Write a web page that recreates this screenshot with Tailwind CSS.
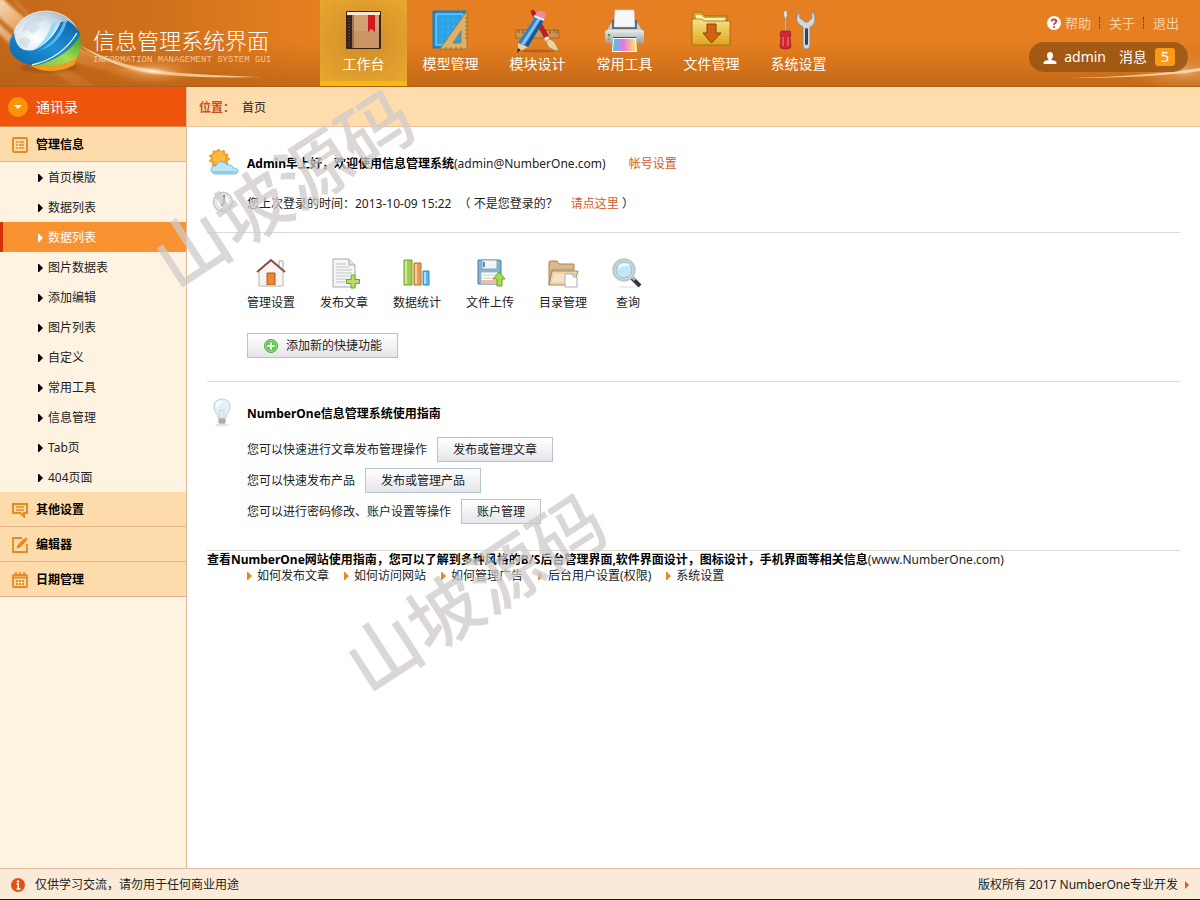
<!DOCTYPE html>
<html lang="zh-CN">
<head>
    <meta charset="UTF-8">
    <meta name="viewport" content="width=device-width, initial-scale=1.0">
    <title>信息管理系统界面</title>
    <script src="https://cdn.jsdelivr.net/npm/@tailwindcss/browser@4"></script>
    <style>
        body {
            font-family: "Noto Sans", "Noto Sans CJK SC", sans-serif;
        }
        .mono {
            font-family: "Liberation Mono", monospace;
        }
    </style>
</head>
<body class="relative flex min-h-screen flex-col overflow-x-hidden bg-white text-[12px] leading-4 text-[#222]">

    <!-- Header -->
    <header class="relative flex h-[87px] overflow-hidden border-b border-[#a9601c] bg-linear-to-b from-[#e57f21] from-50% to-[#c46815] text-white">
        <svg class="absolute left-0 top-0" width="320" height="86" viewBox="0 0 320 86" aria-hidden="true">
            <defs>
                <linearGradient id="shade" x1="0" x2="1" y1="0" y2="0">
                    <stop offset="0" stop-color="#b45f17" stop-opacity=".7"/>
                    <stop offset=".5" stop-color="#bb6316" stop-opacity=".5"/>
                    <stop offset="1" stop-color="#c46a18" stop-opacity="0"/>
                </linearGradient>
                <radialGradient id="glow">
                    <stop offset="0" stop-color="#fff" stop-opacity=".95"/>
                    <stop offset=".25" stop-color="#ffdcae" stop-opacity=".6"/>
                    <stop offset="1" stop-color="#f8a04c" stop-opacity="0"/>
                </radialGradient>
                <linearGradient id="beam" x1="0" x2="1" y1="0" y2="1">
                    <stop offset="0" stop-color="#fff3df" stop-opacity=".9"/>
                    <stop offset=".35" stop-color="#f6b877" stop-opacity=".6"/>
                    <stop offset="1" stop-color="#e8924a" stop-opacity=".15"/>
                </linearGradient>
                <filter id="soft"><feGaussianBlur stdDeviation="1.6"/></filter>
                <filter id="thin"><feGaussianBlur stdDeviation=".6"/></filter>
            </defs>
            <rect width="320" height="86" fill="url(#shade)"/>
            <g filter="url(#soft)">
                <path d="M0 -4 C30 25 60 48 150 70 L120 74 C70 62 30 50 -4 14Z" fill="url(#beam)"/>
                <path d="M-4 20 C20 48 60 60 100 90 L78 90 C50 66 18 56 -4 30Z" fill="url(#beam)" opacity=".8"/>
                <path d="M14 0 C40 30 70 48 110 62" fill="none" stroke="#f0b070" stroke-opacity=".35" stroke-width="3"/>
            </g>
            <path d="M78 44 Q120 69 180 73 Q220 76 262 77 Q200 79 150 73 Q110 67 78 44Z" fill="#ffe6c4" opacity=".75" filter="url(#thin)"/>
            <ellipse cx="152" cy="71" rx="46" ry="14" fill="url(#glow)" opacity=".6"/>
            <ellipse cx="152" cy="71" rx="34" ry="5" fill="url(#glow)" transform="rotate(6 152 71)"/>
        </svg>
        <svg class="absolute right-0 top-0" width="200" height="86" viewBox="0 0 200 86" aria-hidden="true">
            <ellipse cx="185" cy="72" rx="60" ry="22" fill="url(#glow)" opacity=".45"/>
            <path d="M70 78 Q150 76 200 68 L200 71 Q150 78 70 78Z" fill="#ffe2bd" opacity=".8" filter="url(#thin)"/>
        </svg>

        <a href="#" class="relative flex w-80 shrink-0 items-start pl-2">
            <svg class="mt-2 shrink-0" width="76" height="70" viewBox="0 0 76 70" aria-hidden="true">
                <defs>
                    <radialGradient id="ball" cx=".35" cy=".5" r=".7">
                        <stop offset="0" stop-color="#fff"/>
                        <stop offset=".45" stop-color="#dfe9f0"/>
                        <stop offset="1" stop-color="#8fa9ba"/>
                    </radialGradient>
                    <linearGradient id="blueBand" x1="0" x2="1" y1="1" y2="0">
                        <stop offset="0" stop-color="#0a63a8"/>
                        <stop offset=".5" stop-color="#1f8fd6"/>
                        <stop offset="1" stop-color="#0d62a8"/>
                    </linearGradient>
                    <linearGradient id="greenBand" x1="0" x2="1" y1="1" y2="0">
                        <stop offset="0" stop-color="#7cc142"/>
                        <stop offset=".5" stop-color="#a5dc4e"/>
                        <stop offset="1" stop-color="#3c9a2c"/>
                    </linearGradient>
                </defs>
                <ellipse cx="41" cy="60" rx="29" ry="5" fill="#7a3c08" opacity=".35" filter="url(#soft)"/>
                <ellipse cx="38" cy="31" rx="33" ry="28" fill="url(#ball)" stroke="#fff" stroke-opacity=".7"/>
                <path d="M16 16q8-7 16-8l4 4-7 3 3 5-8 6-4-4-6 2zM10 31l8-2 5 4-5 7-7-2z" fill="#b9cedb" opacity=".4" filter="url(#thin)"/>
                <path d="M22 57 Q52 58 70 46 Q69 52 66 57 Q56 63 40 63 Q28 62 22 57Z" fill="#f59a1b"/>
                <path d="M22 57 Q52 52 68 28 L72 27 Q75 42 68 50 Q50 62 22 57Z" fill="url(#greenBand)"/>
                <path d="M6 24 Q8 46 26 42 Q44 34 53 14 L60 13 Q71 20 72 27 Q60 50 26 58 Q-2 52 2 32Z" fill="url(#blueBand)"/>
                <path d="M24 42 Q39 34 44 14 L49 13 Q45 34 24 42Z" fill="#8fe0f8"/>
                <path d="M30 43 Q48 35 56 13 L59 13 Q52 37 30 43Z" fill="#56bdf0"/>
                <path d="M24 57 Q54 50 69 25" fill="none" stroke="#e6f6b0" stroke-width="1.4"/>
            </svg>
            <span class="ml-[9px] mt-[25px] block whitespace-nowrap">
                <span class="block text-[22px] font-light leading-[30px]">信息管理系统界面</span>
                <span class="mono block text-[9px] leading-[10px] text-[#f3c597]">INFORMATION MANAGEMENT SYSTEM GUI</span>
            </span>
        </a>

        <!-- Main navigation -->
        <nav class="relative flex text-[14px] leading-5">
            <a href="#" class="flex w-[87px] flex-col items-center border-b-[5px] border-[#f9b90c] bg-radial from-[#cf8a2a] to-[#e9a92f] pt-2">
                <svg width="45" height="45" viewBox="0 0 45 45" aria-hidden="true">
                    <rect x="5" y="3" width="35" height="38" rx="1" fill="#33231a"/>
                    <path d="M6 4h33v3H6z" fill="#f5ead8"/>
                    <path d="M11 7h27v33H11z" fill="#c89566"/>
                    <path d="M11 7h27v16H11z" fill="#d8aa7c" opacity=".6"/>
                    <path d="M8 7v33" stroke="#806a55" stroke-dasharray="1 2"/>
                    <path d="M12 7v33" stroke="#6e4a2e"/>
                    <path d="M27 7h7v17l-3.500-3-3.500 3z" fill="#d11b1f"/>
                </svg>
                <span class="mt-px">工作台</span>
            </a>
            <a href="#" class="flex w-[87px] flex-col items-center pt-2">
                <svg width="45" height="45" viewBox="0 0 45 45" aria-hidden="true">
                    <path d="M5 3h33v37H5z" fill="#168bd3" stroke="#2479ab"/>
                    <path d="M8 6h27v31H8z" fill="#2aa2e6" stroke="#a4def8"/>
                    <path d="M8 12h27M8 18h27M8 24h27M8 30h27M14 6v31M20 6v31M26 6v31" stroke="#68c3f0" stroke-width=".6" opacity=".4"/>
                    <path d="M12 41 39 3v38zM25 35h8V23z" fill="#dfb069" fill-rule="evenodd" stroke="#9e7132" stroke-width=".8"/>
                    <path d="M37 10h2M37 14h2M37 18h2M37 22h2M37 26h2M37 30h2M18 39v2M23 39v2M28 39v2M33 39v2" stroke="#7d5623" stroke-width=".8"/>
                </svg>
                <span class="mt-px">模型管理</span>
            </a>
            <a href="#" class="flex w-[87px] flex-col items-center pt-2">
                <svg width="45" height="45" viewBox="0 0 45 45" aria-hidden="true">
                    <ellipse cx="23" cy="43" rx="17" ry="1.500" fill="#8c4a10" opacity=".5"/>
                    <rect x="1" y="22" width="43" height="8" fill="#d0964d" stroke="#8f5a24" stroke-width=".7"/>
                    <path d="M4 22v3M8 22v4M12 22v3M16 22v4M31 22v3M35 22v4M39 22v3M42 22v4" stroke="#6c3f14" stroke-width=".8"/>
                    <path d="M16 4q1-4 4 0l14 25-4 2z" fill="#c31b2b" stroke="#851420" stroke-width=".6"/>
                    <path d="m29 30 4-2 2 4-4 2z" fill="#f6f1e6"/>
                    <path d="M31 33q5-4 9 2 2 4 4 8-12-1-13-10z" fill="#e9d3a3" stroke="#a57a3d" stroke-width=".7"/>
                    <path d="M20 9 29 12 13 39 3 35z" fill="#2e83c4"/>
                    <path d="m23 10 3 1L9 37l-3-1z" fill="#86c0e8"/>
                    <path d="m26 11 3 1-16 27-3-1z" fill="#185a94"/>
                    <path d="m3 35 10 4-10 5z" fill="#f2d29b"/>
                    <path d="m3 40 3 2-4 3z" fill="#3d2a1c"/>
                    <path d="m19 9 3-5q5-3 9 2l-2 6z" fill="#ee89a5"/>
                    <path d="m19 8 10 4" stroke="#ecedf0" stroke-width="2"/>
                </svg>
                <span class="mt-px">模块设计</span>
            </a>
            <a href="#" class="flex w-[87px] flex-col items-center pt-2">
                <svg width="45" height="45" viewBox="0 0 45 45" aria-hidden="true">
                    <defs>
                        <linearGradient id="ink">
                            <stop offset="0" stop-color="#41c7f2"/>
                            <stop offset=".45" stop-color="#e779dc"/>
                            <stop offset=".7" stop-color="#f6a3b3"/>
                            <stop offset="1" stop-color="#fff04a"/>
                        </linearGradient>
                        <linearGradient id="metal" x1="0" x2="0" y1="0" y2="1">
                            <stop offset="0" stop-color="#e8ebed"/>
                            <stop offset="1" stop-color="#959ca2"/>
                        </linearGradient>
                    </defs>
                    <path d="M9 15h27l6 12H3z" fill="#c9ced2"/>
                    <path d="M10 12h25v9H10z" fill="#5f666c"/>
                    <path d="M13 2h19l1 17H12z" fill="#f7f8fa" stroke="#c7ccd0" stroke-width=".6"/>
                    <rect x="3" y="22" width="39" height="14" rx="2" fill="url(#metal)"/>
                    <path d="M11 29h23v4H11z" fill="#4a4f54"/>
                    <path d="M11 30h23l1 14H10z" fill="#fff"/>
                    <path d="M12 31h21l1 12H11z" fill="url(#ink)"/>
                    <circle cx="7" cy="27" r="1.300" fill="#36a829"/>
                    <circle cx="7" cy="31" r="1.300" fill="#e28b24"/>
                </svg>
                <span class="mt-px">常用工具</span>
            </a>
            <a href="#" class="flex w-[87px] flex-col items-center pt-2">
                <svg width="45" height="45" viewBox="0 0 45 45" aria-hidden="true">
                    <defs>
                        <linearGradient id="gold" x1="0" x2="0" y1="0" y2="1">
                            <stop offset="0" stop-color="#fbe184"/>
                            <stop offset="1" stop-color="#dda71f"/>
                        </linearGradient>
                    </defs>
                    <path d="M4 7q0-3 2-3h6l4 4h22v6H4z" fill="#dba92d" stroke="#97670d" stroke-width=".8"/>
                    <path d="M7 7h5l3 3h21v3H7z" fill="#fff0b5"/>
                    <path d="M3 11h9l4 2h25v23q0 1-1 1H4q-1 0-1-1z" fill="url(#gold)" stroke="#97670d" stroke-width=".8"/>
                    <path d="M18 16h9v9h5L22.500 35 14 25h4z" fill="#cf6513" stroke="#8b3f07"/>
                </svg>
                <span class="mt-px">文件管理</span>
            </a>
            <a href="#" class="flex w-[87px] flex-col items-center pt-2">
                <svg width="45" height="45" viewBox="0 0 45 45" aria-hidden="true">
                    <path d="M8 3h3v5l-1 2v14H9V10L8 8z" fill="#eceff1" stroke="#8c8c8c" stroke-width=".6"/>
                    <path d="M5 23h9l1 4-1 3 1 9q-1 2-5.500 2T4 39l1-9-1-3z" fill="#d22432" stroke="#8e1420" stroke-width=".6"/>
                    <path d="M7 29v9M12 29v9" stroke="#f28a8f"/>
                    <path d="M23 4q-5 8 0 12 2 2 4 3v17q0 5 3.500 5t3.500-5V19q5-2 5-8t-4-7l1 6-4 4h-3l-5-4z" fill="#cfd8e0" stroke="#7e8a94" stroke-width=".8"/>
                    <rect x="29" y="20" width="3" height="17" rx="1.500" fill="#39424b"/>
                </svg>
                <span class="mt-px">系统设置</span>
            </a>
        </nav>

        <!-- User area -->
        <div class="relative ml-auto flex flex-col items-end pr-3">
            <div class="mt-3.5 flex h-[18px] items-center pr-[9px] text-[13px] text-[#f8d5a8]">
                <svg class="mr-1" width="14" height="14" viewBox="0 0 14 14" aria-hidden="true">
                    <circle cx="7" cy="7" r="7" fill="#fff"/>
                    <path d="M4.700 5.500q0-2.200 2.300-2.200t2.300 2q0 1-1.200 1.700T7 8.800" fill="none" stroke="#c8333b" stroke-width="1.700"/>
                    <circle cx="7" cy="11" r="1" fill="#c8333b"/>
                </svg>
                <a href="#">帮助</a>
                <a href="#" class="ml-2 border-l border-dotted border-[#5c2b05] pl-[9px] leading-3">关于</a>
                <a href="#" class="ml-2 border-l border-dotted border-[#5c2b05] pl-[9px] leading-3">退出</a>
            </div>
            <div class="mt-2.5 flex h-[30px] items-center rounded-full bg-[#8f4f10]/75 pl-3.5 pr-[13px] text-[14px]">
                <svg class="mt-0.5" width="14" height="14" viewBox="0 0 14 14" aria-hidden="true">
                    <path d="M7 1q3 0 3 3.500Q10 7 8.500 8v1l4 1q1 .5 1 3H.5q0-2.500 1-3l4-1V8Q4 7 4 4.500 4 1 7 1z" fill="#fff"/>
                </svg>
                <a href="#" class="ml-[7px]">admin</a>
                <a href="#" class="ml-[13px] flex items-center">消息
                    <b class="ml-2 flex h-[18px] w-5 items-center justify-center rounded-[3px] bg-[#fb9a17] font-normal">5</b>
                </a>
            </div>
        </div>
    </header>

    <div class="flex grow">
        <!-- Sidebar -->
        <aside class="w-[187px] shrink-0 border-r border-[#dfb995] bg-[#fef3e0]">
            <div class="flex h-10 items-center border-b border-[#d98a52] bg-[#ee540b] pl-2 text-[14px] text-white">
                <svg class="mr-2" width="20" height="20" viewBox="0 0 20 20" aria-hidden="true">
                    <circle cx="10" cy="10" r="10" fill="#fb9208"/>
                    <path d="M6 8h8l-4 4z" fill="#fff"/>
                </svg>
                通讯录
            </div>
            <a href="#" class="flex h-[35px] items-center border-b border-[#e2b485] bg-[#fedbaa] pl-3 pt-0.5 font-bold text-black">
                <svg class="mr-2" width="16" height="16" viewBox="0 0 16 16" fill="none" stroke="#e58a26" aria-hidden="true">
                    <rect x="1" y="1" width="14" height="14" rx="1" stroke-width="2"/>
                    <path d="M4 5h2M7 5h5M4 8h2M7 8h5M4 11h2M7 11h5" stroke-width="1.600"/>
                </svg>
                管理信息
            </a>
            <ul>
                <li><a href="#" class="flex h-[30px] items-center gap-[5px] pl-[38px] pt-0.5"><svg width="5" height="8" viewBox="0 0 5 8" fill="#000" aria-hidden="true"><path d="M0 0h1l4 4-4 4H0z"/></svg>首页模版</a></li>
                <li><a href="#" class="flex h-[30px] items-center gap-[5px] pl-[38px] pt-0.5"><svg width="5" height="8" viewBox="0 0 5 8" fill="#000" aria-hidden="true"><path d="M0 0h1l4 4-4 4H0z"/></svg>数据列表</a></li>
                <li><a href="#" class="flex h-[30px] items-center gap-[5px] border-l-[3px] border-[#d6300a] bg-[#f99331] pl-[35px] pt-0.5 text-white"><svg width="5" height="8" viewBox="0 0 5 8" fill="#fff" aria-hidden="true"><path d="M0 0h1l4 4-4 4H0z"/></svg>数据列表</a></li>
                <li><a href="#" class="flex h-[30px] items-center gap-[5px] pl-[38px] pt-0.5"><svg width="5" height="8" viewBox="0 0 5 8" fill="#000" aria-hidden="true"><path d="M0 0h1l4 4-4 4H0z"/></svg>图片数据表</a></li>
                <li><a href="#" class="flex h-[30px] items-center gap-[5px] pl-[38px] pt-0.5"><svg width="5" height="8" viewBox="0 0 5 8" fill="#000" aria-hidden="true"><path d="M0 0h1l4 4-4 4H0z"/></svg>添加编辑</a></li>
                <li><a href="#" class="flex h-[30px] items-center gap-[5px] pl-[38px] pt-0.5"><svg width="5" height="8" viewBox="0 0 5 8" fill="#000" aria-hidden="true"><path d="M0 0h1l4 4-4 4H0z"/></svg>图片列表</a></li>
                <li><a href="#" class="flex h-[30px] items-center gap-[5px] pl-[38px] pt-0.5"><svg width="5" height="8" viewBox="0 0 5 8" fill="#000" aria-hidden="true"><path d="M0 0h1l4 4-4 4H0z"/></svg>自定义</a></li>
                <li><a href="#" class="flex h-[30px] items-center gap-[5px] pl-[38px] pt-0.5"><svg width="5" height="8" viewBox="0 0 5 8" fill="#000" aria-hidden="true"><path d="M0 0h1l4 4-4 4H0z"/></svg>常用工具</a></li>
                <li><a href="#" class="flex h-[30px] items-center gap-[5px] pl-[38px] pt-0.5"><svg width="5" height="8" viewBox="0 0 5 8" fill="#000" aria-hidden="true"><path d="M0 0h1l4 4-4 4H0z"/></svg>信息管理</a></li>
                <li><a href="#" class="flex h-[30px] items-center gap-[5px] pl-[38px] pt-0.5"><svg width="5" height="8" viewBox="0 0 5 8" fill="#000" aria-hidden="true"><path d="M0 0h1l4 4-4 4H0z"/></svg>Tab页</a></li>
                <li><a href="#" class="flex h-[30px] items-center gap-[5px] pl-[38px] pt-0.5"><svg width="5" height="8" viewBox="0 0 5 8" fill="#000" aria-hidden="true"><path d="M0 0h1l4 4-4 4H0z"/></svg>404页面</a></li>
            </ul>
            <a href="#" class="flex h-[35px] items-center border-b border-[#e2b485] bg-[#fedbaa] pl-3 pt-0.5 font-bold text-black">
                <svg class="mr-2" width="16" height="16" viewBox="0 0 16 16" fill="none" stroke="#e58a26" aria-hidden="true">
                    <path d="M1 2h14v9h-3v3.500L8.500 11H1z" stroke-width="2"/>
                    <path d="M4 5h8M4 8h8" stroke-width="1.300"/>
                </svg>
                其他设置
            </a>
            <a href="#" class="flex h-[35px] items-center border-b border-[#e2b485] bg-[#fedbaa] pl-3 pt-0.5 font-bold text-black">
                <svg class="mr-2" width="16" height="16" viewBox="0 0 16 16" fill="none" stroke="#e58a26" aria-hidden="true">
                    <path d="M10 1H1v14h14V7" stroke-width="1.800"/>
                    <path d="m5 11 1-3 6-6 2 2-6 6z" fill="#e58a26"/>
                    <path d="m13 1 2 2" stroke-width="1.800"/>
                </svg>
                编辑器
            </a>
            <a href="#" class="flex h-[35px] items-center border-b border-[#e2b485] bg-[#fedbaa] pl-3 pt-0.5 font-bold text-black">
                <svg class="mr-2" width="16" height="16" viewBox="0 0 16 16" fill="none" stroke="#e58a26" aria-hidden="true">
                    <rect x="1" y="3" width="14" height="12" rx="1" stroke-width="1.800"/>
                    <path d="M1 5.500h14" stroke-width="2"/>
                    <path d="M4 0v4M8 0v4M12 0v4" stroke-width="1.600"/>
                    <path d="M4 9h8M4 12h8" stroke-width="1.800" stroke-dasharray="2 1"/>
                </svg>
                日期管理
            </a>
        </aside>

        <!-- Content -->
        <main class="min-w-0 grow">
            <div class="flex h-10 items-center border-b border-[#e8c496] bg-[#fedcab] pl-3 pt-0.5">
                <b class="text-[#c8501a]">位置：</b>
                <a href="#" class="ml-[7px]">首页</a>
            </div>

            <div class="px-5 pt-4">
                <div class="flex h-10 items-center pt-0.5">
                    <svg class="mr-2 mb-1 shrink-0" width="32" height="28" viewBox="0 0 32 28" aria-hidden="true">
                        <path d="m12 1 2 3 3-2 1 4 3 0-1 3 3 2-3 2 1 4-4 0-1 3-3-2-3 3-1-3-4 0 1-3-4-2 3-3-3-2 4-2 0-3 3 0z" fill="#f4a02a" stroke="#e98c12" stroke-width=".7"/>
                        <circle cx="12" cy="10" r="6.500" fill="#fcb93e"/>
                        <path d="M8 26q-4-1-4-4 0-4 5-4 2-5 7-4 3 1 4 3 5-1 6 3 5 0 5 3t-4 3z" fill="#bfe6f8" stroke="#69b6dd" stroke-width=".9"/>
                        <path d="M8 25h18q3 0 4-2H5q1 2 3 2z" fill="#8bcdee"/>
                    </svg>
                    <p><b class="text-black">Admin早上好，欢迎使用信息管理系统</b>(admin@NumberOne.com) <a href="#" class="ml-5 text-[#d9582a]">帐号设置</a></p>
                </div>
                <div class="flex h-10 items-center pt-0.5">
                    <svg class="ml-[5px] mr-[13px] mb-1 shrink-0" width="22" height="22" viewBox="0 0 22 22" aria-hidden="true">
                        <circle cx="11" cy="11" r="9.500" fill="#ededed" stroke="#c4c4c4" stroke-width="1.500"/>
                        <circle cx="11" cy="11" r="7" fill="#f8f8f8" stroke="#d6d6d6"/>
                        <path d="M12 4v8l-3 3" fill="none" stroke="#6e6e6e" stroke-width="1.500"/>
                    </svg>
                    <p>您上次登录的时间：2013-10-09 15:22 <span class="ml-1">（ 不是您登录的？</span> <a href="#" class="ml-2.5 text-[#d9582a]">请点这里</a> ）</p>
                </div>

                <div class="mt-[9px] border-t border-[#dcdcd0] pl-10 pt-6">
                    <ul class="flex gap-[25px] text-center">
                        <li><a href="#" class="flex flex-col items-center gap-1">
                            <svg width="32" height="34" viewBox="0 0 32 34" aria-hidden="true">
                                <path d="M24 4h4v8h-4z" fill="#fff" stroke="#a0a6ac"/>
                                <path d="M4 14 16 4l12 10v15H4z" fill="#f7f5f3" stroke="#b8b4b0"/>
                                <path d="M2 15 16 3l14 12" fill="none" stroke="#89513f" stroke-width="2"/>
                                <path d="M12 16h8v12h-8z" fill="#ef8732" stroke="#a95a1f"/>
                                <path d="M11 28h10v2H11z" fill="#d5d5d5"/>
                            </svg>管理设置</a></li>
                        <li><a href="#" class="flex flex-col items-center gap-1">
                            <svg width="32" height="34" viewBox="0 0 32 34" aria-hidden="true">
                                <path d="M5 2h16l6 6v22H5z" fill="#f6f6f6" stroke="#a9a9a9"/>
                                <path d="M21 2v6h6" fill="#e0e0e0" stroke="#b0b0b0"/>
                                <path d="M8 7h10M8 10h13M8 13h16M8 16h16M8 19h13M8 22h11M8 25h9" stroke="#c3c3c3"/>
                                <path d="M23 18h4v4.500h4.500v4H27V31h-4v-4.500h-4.500v-4H23z" fill="#b6e06a" stroke="#6aa52a"/>
                            </svg>发布文章</a></li>
                        <li><a href="#" class="flex flex-col items-center gap-1">
                            <svg width="32" height="34" viewBox="0 0 32 34" aria-hidden="true">
                                <path d="M3 3h8v25H3z" fill="#9fce4e" stroke="#76a32e"/>
                                <path d="M5 4v23" stroke="#d0eb9c" stroke-width="2"/>
                                <path d="M13 6h7v22h-7z" fill="#e89d54" stroke="#b87231"/>
                                <path d="M15 7v20" stroke="#f8cfa1" stroke-width="2"/>
                                <path d="M22 14h6v14h-6z" fill="#5cb7e8" stroke="#3189bb"/>
                                <path d="M24 15v12" stroke="#ade1fa" stroke-width="2"/>
                            </svg>数据统计</a></li>
                        <li><a href="#" class="flex flex-col items-center gap-1">
                            <svg width="32" height="34" viewBox="0 0 32 34" aria-hidden="true">
                                <path d="M4 3h22l1 1v23H4z" fill="#7fb4d6" stroke="#4d7f9f"/>
                                <path d="M8 3h15v9H8z" fill="#eef4f8" stroke="#8ba7b7"/>
                                <path d="M9 5h2v5H9z" fill="#628ca8"/>
                                <path d="M7 15h17v12H7z" fill="#fff" stroke="#9bb1be"/>
                                <path d="M9 18h13M9 21h13" stroke="#c8c8c8"/>
                                <path d="M7 23h17v4H7z" fill="#f0bba6"/>
                                <path d="m25 15 6 7h-3v7h-5v-7h-4z" fill="#a9dc52" stroke="#68a322"/>
                            </svg>文件上传</a></li>
                        <li><a href="#" class="flex flex-col items-center gap-1">
                            <svg width="32" height="34" viewBox="0 0 32 34" aria-hidden="true">
                                <path d="M2 5q0-1 1-1h7l2 3h15v6H5L2 28z" fill="#d9b98a" stroke="#a3845a"/>
                                <path d="M5 14h26l-4 14H2z" fill="#eed3ae" stroke="#aa895c"/>
                                <path d="M8 17h19l-3 8H5z" fill="#f5e2c8"/>
                                <path d="M18 17h8l4 3v10H18z" fill="#fff" stroke="#a7adb1"/>
                                <path d="M26 17v3h4" fill="none" stroke="#a7adb1"/>
                            </svg>目录管理</a></li>
                        <li><a href="#" class="flex flex-col items-center gap-1">
                            <svg width="32" height="34" viewBox="0 0 32 34" aria-hidden="true">
                                <ellipse cx="16" cy="30" rx="10" ry="1" fill="#ececec"/>
                                <path d="m20 21 8 8" stroke="#35383c" stroke-width="4"/>
                                <path d="m20 20 3 3" stroke="#aeb2b6" stroke-width="3"/>
                                <circle cx="12" cy="13" r="10.500" fill="#d3edf8" stroke="#c3c7cb" stroke-width="2.500"/>
                                <circle cx="12" cy="13" r="8" fill="#c4e7f7" stroke="#8fb7ca"/>
                                <path d="M6 12q1-6 7-6 4 0 5 3-7-1-12 3z" fill="#fff" opacity=".8"/>
                            </svg>查询</a></li>
                    </ul>
                    <button type="button" class="mt-[22px] flex h-[25px] items-center border border-[#b3c3cf] bg-linear-to-b from-white to-[#e6e6ea] px-[15px]">
                        <svg class="mr-[7px]" width="16" height="16" viewBox="0 0 16 16" aria-hidden="true">
                            <circle cx="8" cy="8" r="6.500" fill="#5fca4f" stroke="#4aa63f"/>
                            <circle cx="8" cy="8" r="5.500" fill="none" stroke="#a8e29b" stroke-width=".8"/>
                            <path d="M8 4.500v7M4.500 8h7" stroke="#fff" stroke-width="2"/>
                        </svg>
                        添加新的快捷功能
                    </button>
                </div>

                <div class="mt-[23px] border-t border-[#dcdcd0] pt-3">
                    <div class="flex h-10 items-center">
                        <svg class="ml-1 mr-[14px] mb-1 shrink-0" width="22" height="30" viewBox="0 0 22 30" aria-hidden="true">
                            <ellipse cx="11" cy="28" rx="7" ry="1.500" fill="#e4e4e4"/>
                            <path d="M11 2q8 0 8 8 0 4-3 7-1 1-1 4H7q0-3-1-4-3-3-3-7 0-8 8-8z" fill="#e3f1f9" stroke="#b9cfdc"/>
                            <path d="M6 10q0-5 5-5" fill="none" stroke="#fff" stroke-width="2"/>
                            <path d="M9 20V12l2 2 2-2v8" fill="none" stroke="#c2d4df"/>
                            <path d="M8 21h6v6H8z" fill="#c4c4c4"/>
                            <path d="M7 23h8M7 25h8" stroke="#9a9a9a"/>
                        </svg>
                        <h2 class="font-bold text-black">NumberOne信息管理系统使用指南</h2>
                    </div>
                    <div class="mt-[3px] flex flex-col gap-1.5 pl-10">
                        <div class="flex items-center gap-2.5">您可以快速进行文章发布管理操作
                            <button type="button" class="h-[25px] border border-[#b3c3cf] bg-linear-to-b from-white to-[#e6e6ea] px-[15px]">发布或管理文章</button></div>
                        <div class="flex items-center gap-2.5">您可以快速发布产品
                            <button type="button" class="h-[25px] border border-[#b3c3cf] bg-linear-to-b from-white to-[#e6e6ea] px-[15px]">发布或管理产品</button></div>
                        <div class="flex items-center gap-2.5">您可以进行密码修改、账户设置等操作
                            <button type="button" class="h-[25px] border border-[#b3c3cf] bg-linear-to-b from-white to-[#e6e6ea] px-[15px]">账户管理</button></div>
                    </div>
                </div>

                <div class="mt-[26px] border-t border-[#dcdcd0] pt-px">
                    <p class="whitespace-nowrap"><b class="text-black">查看NumberOne网站使用指南，您可以了解到多种风格的B/S后台管理界面,软件界面设计，图标设计，手机界面等相关信息</b>(www.NumberOne.com)</p>
                    <ul class="flex gap-[15px] pl-10">
                        <li><a href="#" class="flex items-center gap-[5px]"><svg width="5" height="8" viewBox="0 0 5 8" fill="#e08a28" aria-hidden="true"><path d="M0 0h1l4 4-4 4H0z"/></svg>如何发布文章</a></li>
                        <li><a href="#" class="flex items-center gap-[5px]"><svg width="5" height="8" viewBox="0 0 5 8" fill="#e08a28" aria-hidden="true"><path d="M0 0h1l4 4-4 4H0z"/></svg>如何访问网站</a></li>
                        <li><a href="#" class="flex items-center gap-[5px]"><svg width="5" height="8" viewBox="0 0 5 8" fill="#e08a28" aria-hidden="true"><path d="M0 0h1l4 4-4 4H0z"/></svg>如何管理广告</a></li>
                        <li><a href="#" class="flex items-center gap-[5px]"><svg width="5" height="8" viewBox="0 0 5 8" fill="#e08a28" aria-hidden="true"><path d="M0 0h1l4 4-4 4H0z"/></svg>后台用户设置(权限)</a></li>
                        <li><a href="#" class="flex items-center gap-[5px]"><svg width="5" height="8" viewBox="0 0 5 8" fill="#e08a28" aria-hidden="true"><path d="M0 0h1l4 4-4 4H0z"/></svg>系统设置</a></li>
                    </ul>
                </div>
            </div>
        </main>
    </div>

    <!-- Footer -->
    <footer class="flex h-8 items-center border-b border-t border-b-[#1c1a12] border-t-[#e6bfa0] bg-[#f9ebd8] px-[11px] pt-0.5">
        <svg class="mr-[10px]" width="14" height="14" viewBox="0 0 14 14" aria-hidden="true">
            <circle cx="7" cy="7" r="7" fill="#dc5516"/>
            <path d="M5.500 6H7.300v4.500M5.500 11h4" fill="none" stroke="#fff" stroke-width="1.500"/>
            <circle cx="7" cy="3.500" r="1.200" fill="#fff"/>
        </svg>
        <span>仅供学习交流，请勿用于任何商业用途</span>
        <span class="ml-auto">版权所有 2017 NumberOne专业开发</span>
        <svg class="ml-[7px]" width="4" height="8" viewBox="0 0 4 8" fill="#d2601c" aria-hidden="true"><path d="M0 0l4 4-4 4z"/></svg>
    </footer>

    <!-- Watermarks -->
    <div class="pointer-events-none absolute left-[137px] top-[148px] -rotate-33 whitespace-nowrap text-[73px] font-medium leading-[80px] text-[#cfcaca]/75" aria-hidden="true">山坡源码</div>
    <div class="pointer-events-none absolute left-[329px] top-[552px] -rotate-33 whitespace-nowrap text-[73px] font-medium leading-[80px] text-[#cfcaca]/75" aria-hidden="true">山坡源码</div>
</body>
</html>
